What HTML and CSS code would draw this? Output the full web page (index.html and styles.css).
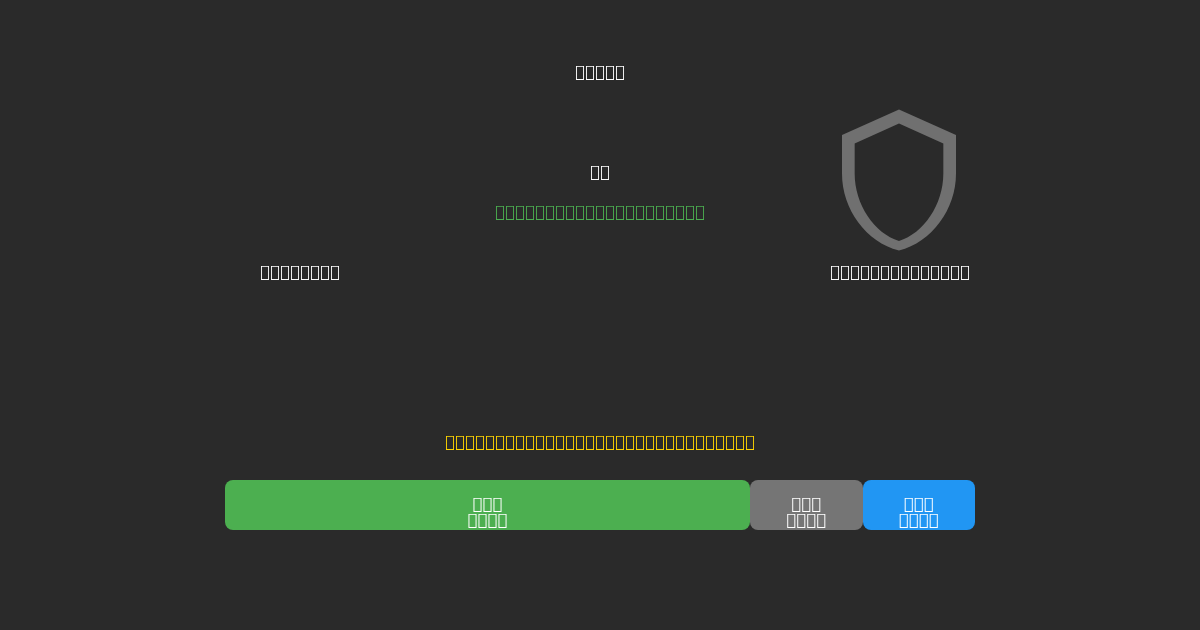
FILE: index.html
```html
<!DOCTYPE html>
<html>
<head>
<meta charset="utf-8">
<title>Shield panel</title>
<link rel="stylesheet" href="styles.css">
</head>
<body>
<!-- The reference shows only missing-glyph boxes, so its wording cannot be read.
     Private-use code points reproduce those boxes, one per box. -->
<main class="app">
  <h1 class="title">&#xE000;&#xE000;&#xE000;&#xE000;&#xE000;</h1>
  <section class="panel">
    <div class="side">
      <p class="label">&#xE000;&#xE000;&#xE000;&#xE000;&#xE000;&#xE000;&#xE000;&#xE000;</p>
    </div>
    <div class="center">
      <p class="label">&#xE000;&#xE000;</p>
      <p class="status">&#xE000;&#xE000;&#xE000;&#xE000;&#xE000;&#xE000;&#xE000;&#xE000;&#xE000;&#xE000;&#xE000;&#xE000;&#xE000;&#xE000;&#xE000;&#xE000;&#xE000;&#xE000;&#xE000;&#xE000;&#xE000;</p>
    </div>
    <div class="side">
      <svg class="shield" viewBox="0 0 24 24" preserveAspectRatio="none" aria-hidden="true"><path d="M12 1 3 5v6c0 5.55 3.84 10.74 9 12 5.16-1.26 9-6.45 9-12V5l-9-4zm0 2.18 7 3.12v4.7c0 4.83-3.13 9.37-7 10.5-3.87-1.13-7-5.67-7-10.5V6.3l7-3.12z"/></svg>
      <p class="label">&#xE000;&#xE000;&#xE000;&#xE000;&#xE000;&#xE000;&#xE000;&#xE000;&#xE000;&#xE000;&#xE000;&#xE000;&#xE000;&#xE000;</p>
    </div>
  </section>
  <p class="warning">&#xE000;&#xE000;&#xE000;&#xE000;&#xE000;&#xE000;&#xE000;&#xE000;&#xE000;&#xE000;&#xE000;&#xE000;&#xE000;&#xE000;&#xE000;&#xE000;&#xE000;&#xE000;&#xE000;&#xE000;&#xE000;&#xE000;&#xE000;&#xE000;&#xE000;&#xE000;&#xE000;&#xE000;&#xE000;&#xE000;&#xE000;</p>
  <div class="actions">
    <button class="btn btn-green">&#xE000;&#xE000;&#xE000;<br>&#xE000;&#xE000;&#xE000;&#xE000;</button>
    <button class="btn btn-gray">&#xE000;&#xE000;&#xE000;<br>&#xE000;&#xE000;&#xE000;&#xE000;</button>
    <button class="btn btn-blue">&#xE000;&#xE000;&#xE000;<br>&#xE000;&#xE000;&#xE000;&#xE000;</button>
  </div>
</main>
</body>
</html>
```
FILE: styles.css
```css
* {
  box-sizing: border-box;
}

html,
body {
  margin: 0;
  height: 100%;
}

body {
  background: #2a2a2a;
  color: #fff;
  font-family: "DejaVu Sans", sans-serif;
  font-size: 16px;
  line-height: 20px;
  letter-spacing: 0.4px;
  overflow: hidden;
}

.app {
  width: 750px;
  margin: 0 auto;
  padding-top: 62px;
  display: flex;
  flex-direction: column;
  will-change: transform;
}

.title {
  margin: 0;
  font-size: 16px;
  font-weight: 400;
  text-align: center;
}

.panel {
  margin-top: 20px;
  height: 180px;
  display: grid;
  grid-template-columns: 150px 1fr 150px;
}

.side {
  display: flex;
  flex-direction: column;
  align-items: center;
  justify-content: flex-end;
  height: 180px;
}

.center {
  padding-top: 60px;
  display: flex;
  flex-direction: column;
  align-items: center;
  gap: 20px;
}

.label,
.status,
.warning {
  margin: 0;
  white-space: nowrap;
}

.status {
  color: #4caf50;
}

.shield {
  display: block;
  width: 152px;
  height: 154px;
  margin: 0 0 5px -2px;
  flex: none;
  fill: #707070;
}

.warning {
  margin-top: 150px;
  color: #ffd600;
  text-align: center;
}

.actions {
  margin-top: 28px;
  display: grid;
  grid-template-columns: 70% 15% 15%;
}

.btn {
  height: 50px;
  padding: 16px 0 2px;
  border: 0;
  border-radius: 8px;
  color: #fff;
  font: inherit;
  letter-spacing: inherit;
  line-height: 16px;
  text-align: center;
}

.btn-green {
  background: #4caf50;
}

.btn-gray {
  background: #757575;
}

.btn-blue {
  background: #2196f3;
}
```
